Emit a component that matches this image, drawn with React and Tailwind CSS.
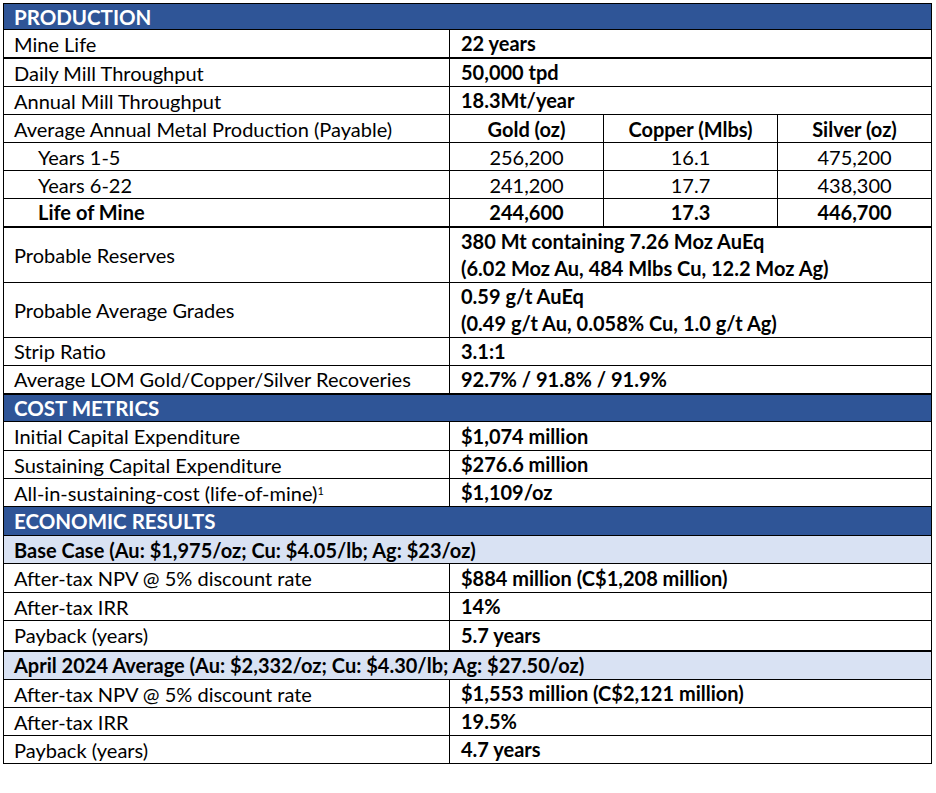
const production = [
  { label: "Mine Life", value: "22 years", thick: true },
  { label: "Daily Mill Throughput", value: "50,000 tpd" },
  { label: "Annual Mill Throughput", value: "18.3Mt/year" },
];

const metals = [
  { label: "Years 1-5", values: ["256,200", "16.1", "475,200"] },
  { label: "Years 6-22", values: ["241,200", "17.7", "438,300"] },
  { label: "Life of Mine", values: ["244,600", "17.3", "446,700"], bold: true, thick: true },
];

const cell = "border border-black";

function Header({ children, h = "h-[28px]" }) {
  return (
    <tr>
      <td colSpan={4} className={`${cell} ${h} bg-[#2f5597] px-[10px] pt-[1px] text-[20.5px] font-bold leading-none text-white`}>
        {children}
      </td>
    </tr>
  );
}

function Band({ children, h = "h-[28px]" }) {
  return (
    <tr>
      <td colSpan={4} className={`${cell} ${h} bg-[#d9e2f3] px-[10px] font-bold leading-none`}>
        {children}
      </td>
    </tr>
  );
}

function Row({ label, value, thick, h = "h-[28px]" }) {
  return (
    <tr>
      <td className={`${cell} ${thick ? "border-b-2" : ""} ${h} px-[10px] leading-none`}>{label}</td>
      <td colSpan={3} className={`${cell} ${thick ? "border-b-2" : ""} ${h} px-[11px] font-bold leading-[27px]`}>
        {value}
      </td>
    </tr>
  );
}

export default function App() {
  return (
    <div className="min-h-[793px] bg-white px-[3px] pt-[3px] text-[20px] text-black [font-family:Lato,'Noto_Sans',sans-serif]">
      <table className="w-[928px] table-fixed border-collapse border border-black">
        <colgroup>
          <col className="w-[446px]" />
          <col className="w-[154px]" />
          <col className="w-[174px]" />
          <col className="w-[154px]" />
        </colgroup>
        <tbody>
          <Header h="h-[26px]">PRODUCTION</Header>
          {production.map((r) => (
            <Row key={r.label} {...r} />
          ))}
          <tr>
            <td className={`${cell} h-[28px] px-[10px] leading-none`}>Average Annual Metal Production (Payable)</td>
            <td className={`${cell} text-center font-bold leading-none`}>Gold (oz)</td>
            <td className={`${cell} text-center font-bold leading-none`}>Copper (Mlbs)</td>
            <td className={`${cell} text-center font-bold leading-none`}>Silver (oz)</td>
          </tr>
          {metals.map((m) => (
            <tr key={m.label} className={m.bold ? "font-bold" : ""}>
              <td className={`${cell} ${m.thick ? "border-b-2" : ""} h-[28px] pl-[34px] leading-none`}>{m.label}</td>
              {m.values.map((v) => (
                <td key={v} className={`${cell} ${m.thick ? "border-b-2" : ""} text-center leading-none`}>
                  {v}
                </td>
              ))}
            </tr>
          ))}
          <Row
            label="Probable Reserves"
            h="h-[55px]"
            value={
              <>
                380 Mt containing 7.26 Moz AuEq
                <br />
                (6.02 Moz Au, 484 Mlbs Cu, 12.2 Moz Ag)
              </>
            }
          />
          <Row
            label="Probable Average Grades"
            h="h-[53px]"
            value={
              <>
                0.59 g/t AuEq
                <br />
                (0.49 g/t Au, 0.058% Cu, 1.0 g/t Ag)
              </>
            }
          />
          <Row label="Strip Ratio" value="3.1:1" />
          <Row label="Average LOM Gold/Copper/Silver Recoveries" value="92.7% / 91.8% / 91.9%" thick />
          <Header>COST METRICS</Header>
          <Row label="Initial Capital Expenditure" value="$1,074 million" h="h-[29px]" />
          <Row label="Sustaining Capital Expenditure" value="$276.6 million" />
          <Row
            label={
              <>
                All-in-sustaining-cost (life-of-mine)<sup className="text-[11px]">1</sup>
              </>
            }
            value="$1,109/oz"
            h="h-[27px]"
          />
          <Header h="h-[29px]">ECONOMIC RESULTS</Header>
          <Band>Base Case (Au: $1,975/oz; Cu: $4.05/lb; Ag: $23/oz)</Band>
          <Row label="After-tax NPV @ 5% discount rate" value="$884 million (C$1,208 million)" h="h-[29px]" />
          <Row label="After-tax IRR" value="14%" />
          <Row label="Payback (years)" value="5.7 years" thick h="h-[30px]" />
          <Band h="h-[29px]">April 2024 Average (Au: $2,332/oz; Cu: $4.30/lb; Ag: $27.50/oz)</Band>
          <Row label="After-tax NPV @ 5% discount rate" value="$1,553 million (C$2,121 million)" />
          <Row label="After-tax IRR" value="19.5%" />
          <Row label="Payback (years)" value="4.7 years" />
        </tbody>
      </table>
    </div>
  );
}
